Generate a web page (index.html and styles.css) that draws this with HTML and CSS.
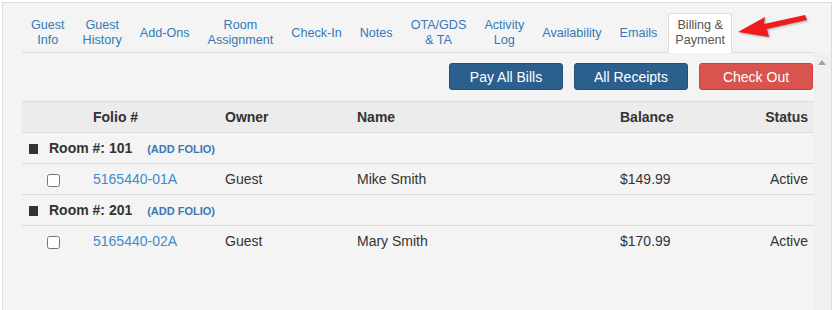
FILE: index.html
```html
<!DOCTYPE html>
<html>
<head>
    <title>Reservation - Billing &amp; Payment</title>
    <meta charset="UTF-8">
    <link rel="stylesheet" href="styles.css">
</head>
<body>
    <div class="frame">
        <ul class="tabs">
            <li><a href="#">Guest<br>Info</a></li>
            <li><a href="#">Guest<br>History</a></li>
            <li><a href="#">Add-Ons</a></li>
            <li><a href="#">Room<br>Assignment</a></li>
            <li><a href="#">Check-In</a></li>
            <li><a href="#">Notes</a></li>
            <li><a href="#">OTA/GDS<br>&amp; TA</a></li>
            <li><a href="#">Activity<br>Log</a></li>
            <li><a href="#">Availability</a></li>
            <li><a href="#">Emails</a></li>
            <li class="active"><a href="#">Billing &amp;<br>Payment</a></li>
        </ul>

        <div class="pane">
            <div class="content">
                <div class="actions">
                    <button type="button" class="btn btn-blue">Pay All Bills</button>
                    <button type="button" class="btn btn-blue">All Receipts</button>
                    <button type="button" class="btn btn-red">Check Out</button>
                </div>

                <table class="folios">
                    <colgroup>
                        <col class="c-check">
                        <col class="c-folio">
                        <col class="c-owner">
                        <col class="c-name">
                        <col class="c-balance">
                        <col class="c-status">
                    </colgroup>
                    <thead>
                        <tr>
                            <th></th>
                            <th>Folio #</th>
                            <th>Owner</th>
                            <th>Name</th>
                            <th>Balance</th>
                            <th class="right">Status</th>
                        </tr>
                    </thead>
                    <tbody>
                        <tr class="room">
                            <td colspan="6"><span class="square"></span>Room #: 101 <a href="#" class="add-folio">(ADD FOLIO)</a></td>
                        </tr>
                        <tr>
                            <td class="center"><input type="checkbox"></td>
                            <td><a href="#">5165440-01A</a></td>
                            <td>Guest</td>
                            <td>Mike Smith</td>
                            <td>$149.99</td>
                            <td class="right">Active</td>
                        </tr>
                        <tr class="room">
                            <td colspan="6"><span class="square"></span>Room #: 201 <a href="#" class="add-folio">(ADD FOLIO)</a></td>
                        </tr>
                        <tr class="last">
                            <td class="center"><input type="checkbox"></td>
                            <td><a href="#">5165440-02A</a></td>
                            <td>Guest</td>
                            <td>Mary Smith</td>
                            <td>$170.99</td>
                            <td class="right">Active</td>
                        </tr>
                    </tbody>
                </table>
            </div>
            <div class="scrollbar"><span class="up"></span></div>
        </div>

        <!-- red callout arrow pointing at the active tab -->
        <svg class="callout" width="80" height="30" viewBox="0 0 80 30">
            <polygon points="0,18 27,3 26,10 67,1 69,6 29,15 31,23" fill="#ee1c1c"/>
        </svg>
    </div>
</body>
</html>
```

FILE: styles.css
```css
/* Page */
body {
    margin: 0;
    background-color: #fff;
    font-family: "Liberation Sans", Arial, sans-serif;
    font-size: 14px;
    color: #333;
}

/* Outer panel */
.frame {
    position: relative;
    box-sizing: border-box;
    height: 308px;
    margin: 2px 2px 0 2px;
    border: 1px solid #dcdcdc;
    border-bottom: none;
    background-color: #f4f4f4;
    display: flex;
    flex-direction: column;
}

/* Tabs */
.tabs {
    display: flex;
    list-style: none;
    margin: 10px 17px 0 19px;
    padding: 0;
    border-bottom: 1px solid #dcdcdc;
}

.tabs li {
    display: flex;
    margin: 0 2px -1px 2px;
}

.tabs a {
    display: flex;
    align-items: center;
    padding: 4px 6px;
    border: 1px solid transparent;
    border-radius: 4px 4px 0 0;
    font-size: 12.6px;
    line-height: 15px;
    text-align: center;
    color: #337ab7;
    text-decoration: none;
}

.tabs li.active a {
    background-color: #fff;
    border-color: #dcdcdc;
    border-bottom-color: #fff;
    color: #555;
}

/* Scrolling body */
.pane {
    flex: 1;
    display: flex;
}

.content {
    flex: 1;
    padding-left: 19px;
}

.scrollbar {
    width: 17px;
    background-color: #f0f0f0;
    position: relative;
}

.scrollbar .up {
    position: absolute;
    top: 7px;
    left: 4px;
    width: 0;
    height: 0;
    border-left: 4px solid transparent;
    border-right: 4px solid transparent;
    border-bottom: 5px solid #a3a3a3;
}

/* Buttons */
.actions {
    display: flex;
    justify-content: flex-end;
    gap: 11px;
    margin-top: 10px;
    padding-right: 1px;
}

.btn {
    width: 114px;
    height: 27px;
    padding: 0;
    border-radius: 3px;
    font-family: "Liberation Sans", Arial, sans-serif;
    font-size: 14px;
    color: #fff;
    cursor: pointer;
}

.btn-blue {
    background-color: #2b5f8e;
    border: 1px solid #244f77;
}

.btn-red {
    background-color: #d9534f;
    border: 1px solid #d43f3a;
}

/* Folio table */
.folios {
    width: 100%;
    margin-top: 11px;
    border-collapse: collapse;
    table-layout: fixed;
}

.c-check { width: 63px; }
.c-folio { width: 132px; }
.c-owner { width: 132px; }
.c-name { width: 263px; }
.c-balance { width: 120px; }

.folios th,
.folios td {
    height: 30px;
    padding: 0 8px;
    text-align: left;
    border-bottom: 1px solid #dcdcdc;
    white-space: nowrap;
}

.folios th {
    background-color: #ececec;
    border-top: 1px solid #dcdcdc;
    font-weight: bold;
}

.folios tr.last td {
    border-bottom: none;
}

.folios .right {
    text-align: right;
    padding-right: 6px;
}

.folios .center {
    text-align: center;
    padding: 0;
}

.folios input[type="checkbox"] {
    margin: 0;
    vertical-align: middle;
}

.folios a {
    color: #428bca;
    text-decoration: none;
}

.room td {
    padding-left: 7px;
    font-weight: bold;
}

.square {
    display: inline-block;
    width: 9px;
    height: 10px;
    margin-right: 11px;
    background-color: #333;
    vertical-align: -1px;
}

.folios a.add-folio {
    margin-left: 11px;
    font-size: 11px;
    color: #3c78b4;
}

/* Callout arrow over the tabs */
.callout {
    position: absolute;
    top: 11px;
    left: 735px;
    filter: drop-shadow(1px 1px 1px rgba(0, 0, 0, 0.3));
}
```
